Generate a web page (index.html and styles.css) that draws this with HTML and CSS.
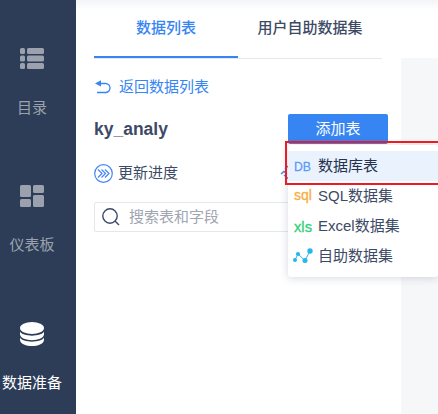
FILE: index.html
```html
<!DOCTYPE html>
<html lang="zh-CN">
<head>
<meta charset="utf-8">
<title>数据准备</title>
<link rel="stylesheet" href="styles.css">
</head>
<body>
<div class="app">
  <nav class="sidebar">
    <a class="nav-item">
      <svg class="nav-icon" viewBox="0 0 24 24" fill="currentColor"><rect y="1" width="5" height="6" rx="1.5"/><rect x="7" y="1" width="17" height="6" rx="1.5"/><rect y="8.500" width="5" height="6" rx="1.500"/><rect x="7" y="8.500" width="17" height="6" rx="1.500"/><rect y="16" width="5" height="6" rx="1.500"/><rect x="7" y="16" width="17" height="6" rx="1.500"/></svg>
      <span>目录</span>
    </a>
    <a class="nav-item">
      <svg class="nav-icon" viewBox="0 0 24 24" fill="currentColor"><rect y="1" width="11" height="12" rx="1.500"/><rect x="13" y="1" width="11" height="8" rx="1.500"/><rect y="15" width="11" height="8" rx="1.500"/><rect x="13" y="11" width="11" height="12" rx="1.500"/></svg>
      <span>仪表板</span>
    </a>
    <a class="nav-item active">
      <svg class="nav-icon" viewBox="0 0 24 24" fill="currentColor"><ellipse cx="12" cy="6" rx="12" ry="6"/><path d="M0 9.500C2 15 22 15 24 9.500V12.500C23 20 1 20 0 12.500Z"/><path d="M0 15.500C2 21 22 21 24 15.500V18C23 26 1 26 0 18Z"/></svg>
      <span>数据准备</span>
    </a>
  </nav>
  <main class="panel">
    <div class="tabs">
      <div class="tab current">数据列表</div>
      <div class="tab">用户自助数据集</div>
    </div>
    <a class="back">
      <svg width="16" height="14" viewBox="0 0 16 14"><path d="M3 3.500H10.500A4.500 4.500 0 0 1 10.500 12.500H2" fill="none" stroke="currentColor" stroke-width="1.300"/><path d="M0 3.500L6 .3V6.500Z" fill="currentColor"/></svg>
      <span>返回数据列表</span>
    </a>
    <div class="title-row">
      <h1>ky_analy</h1>
      <div class="add">
        <button>添加表</button>
        <div class="menu">
          <div class="option selected"><svg class="kind db" viewBox="0 0 20 18"><text x="1" y="13.500" textLength="17" lengthAdjust="spacingAndGlyphs">DB</text></svg>数据库表</div>
          <div class="option"><svg class="kind sql" viewBox="0 0 20 18"><text x="1" y="13" textLength="18" lengthAdjust="spacingAndGlyphs">sql</text></svg>SQL数据集</div>
          <div class="option"><svg class="kind xls" viewBox="0 0 20 18"><text x="1" y="14.500" textLength="18" lengthAdjust="spacingAndGlyphs">xls</text></svg>Excel数据集</div>
          <div class="option"><svg class="kind chart" viewBox="0 0 20 18"><path d="M2 13L5 7L12 13.500L17 4" fill="none" stroke="currentColor"/><g fill="currentColor"><circle cx="2" cy="13" r="2"/><circle cx="5" cy="7" r="2.100"/><circle cx="12" cy="13.500" r="2.500"/><circle cx="17" cy="4" r="2.700"/></g></svg>自助数据集</div>
        </div>
        <div class="highlight"></div>
      </div>
    </div>
    <div class="progress">
      <svg width="19" height="19" viewBox="0 0 19 19" fill="none" stroke="currentColor" stroke-width="1.200"><circle cx="9.500" cy="9.500" r="8.800"/><path d="M4 5.500L8 9.500L4 13.500M7.500 5.500L11.500 9.500L7.500 13.500M11 5.500L15 9.500L11 13.500"/></svg>
      <span>更新进度</span>
      <svg class="refresh" width="18" height="18" viewBox="0 0 18 18" fill="none" stroke="currentColor" stroke-width="1.500"><path d="M4 5L7 2M0 10L3 7.500L6 10M3 11L9 16"/></svg>
    </div>
    <div class="search">
      <svg width="18" height="18" viewBox="0 0 18 18" fill="none" stroke="currentColor" stroke-width="1.400"><circle cx="8" cy="8" r="7.200"/><path d="M13 13L17 17"/></svg>
      <span>搜索表和字段</span>
    </div>
  </main>
  <div class="canvas"></div>
</div>
</body>
</html>
```
FILE: styles.css
```css
* { box-sizing: border-box; }
body {
  margin: 0;
  overflow: hidden;
  background: #fff;
  color: #3d4a66;
  font: 15px/20px "Liberation Sans", "Noto Sans CJK SC", sans-serif;
}
svg { flex: none; overflow: visible; }
.app { display: flex; width: 438px; height: 414px; }
.sidebar { width: 76px; flex: none; padding-right: 12px; background: #2d3d58; color: #9ba2ad; }
.nav-item { display: flex; flex-direction: column; align-items: center; height: 137px; padding-top: 47px; white-space: nowrap; }
.nav-item.active { color: #fff; padding-top: 48px; }
.nav-icon { width: 24px; height: 24px; margin-bottom: 27px; }
.panel {
  width: 325px;
  flex: none;
  padding: 0 19px 0 18px;
  background: linear-gradient(#f3f4f6, #fff 10px);
}
.tabs { display: flex; height: 59px; border-bottom: 1px solid #e6e7ea; }
.tab { width: 144px; height: 58px; padding-top: 18px; text-align: center; font-weight: 500; white-space: nowrap; }
.tab.current { color: #3685f2; border-bottom: 2px solid #3685f2; }
.back { display: flex; align-items: center; gap: 8px; height: 55px; padding-left: 1px; color: #3685f2; }
.title-row { display: flex; justify-content: space-between; align-items: center; width: 294px; height: 30px; }
h1 { margin: 0; font-size: 17.5px; line-height: 24px; }
.add { position: relative; width: 100px; height: 30px; }
button { display: block; width: 100px; height: 30px; padding: 0; border: 0; border-radius: 2px; background: #3685f2; color: #fff; font: inherit; }
.menu {
  position: absolute;
  top: 31px;
  left: 0;
  z-index: 1;
  width: 150px;
  padding: 6px 0;
  border-radius: 3px;
  background: #fff;
  box-shadow: 0 1px 9px rgba(45, 61, 88, .2);
}
.option { display: flex; align-items: center; gap: 5px; height: 30px; padding-left: 5px; white-space: nowrap; }
.option.selected { background: #eaf2fe; color: #25324d; }
.kind { width: 20px; height: 18px; }
.kind text { font: 15px "Liberation Sans", sans-serif; fill: currentColor; stroke: currentColor; stroke-width: .3px; }
.kind.db text { font-size: 13px; }
.db { color: #5c9bf7; }
.sql { color: #f9ad42; }
.xls { color: #32cf79; }
.chart { color: #24b7ef; }
.highlight { position: absolute; z-index: 2; top: 27px; left: -3px; width: 160px; height: 44px; border: 2px solid #ed1c24; }
.progress { display: flex; align-items: center; gap: 5px; height: 58px; }
.progress svg { color: #4584f4; }
.refresh { margin-left: 98px; }
.search { display: flex; align-items: center; gap: 9px; height: 30px; padding-left: 7px; border: 1px solid #e6e7ea; border-radius: 2px; color: #9fa5b1; }
.search svg { color: #3d4a66; }
.canvas { flex: 1; border-top: 58px solid #fff; background: #f6f7f9; border-image: linear-gradient(#f3f4f6, #fff 10px) 58 0 0; }
```
